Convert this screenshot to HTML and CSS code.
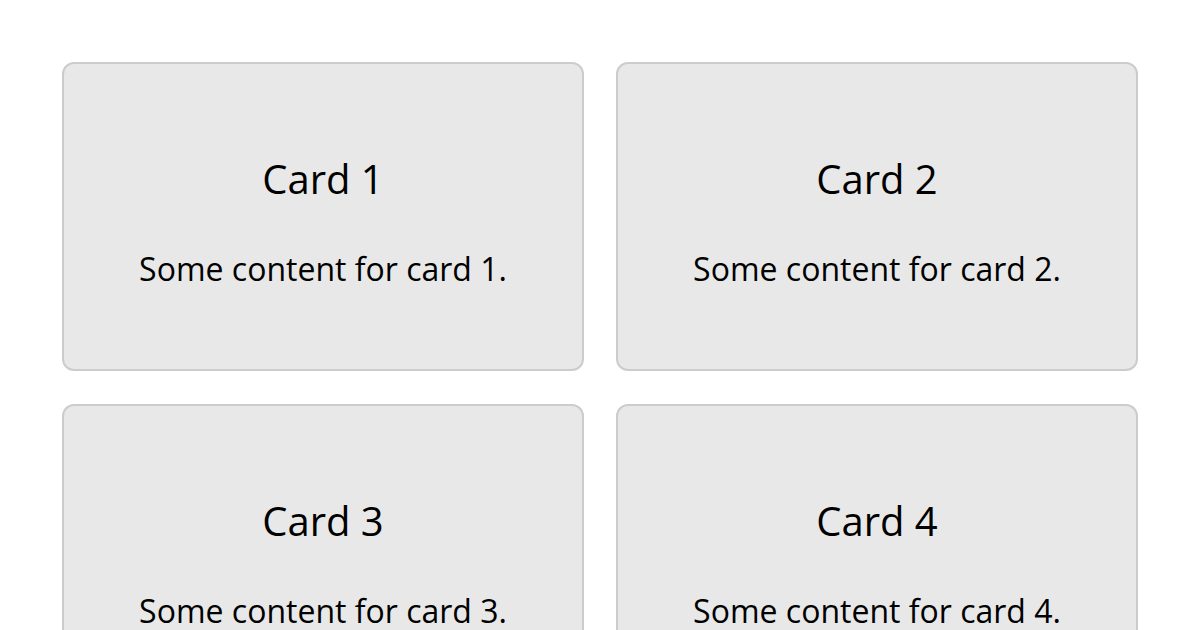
FILE: index.html
```html
<!DOCTYPE html>
<html lang="en">
<head>
    <meta charset="UTF-8">
    <meta name="viewport" content="width=device-width, initial-scale=1.0">
    <title>Cards</title>
    <link rel="stylesheet" href="styles.css">
</head>
<body>
    <div class="card-grid">
        <div class="card">
            <h2>Card 1</h2>
            <p>Some content for card 1.</p>
        </div>
        <div class="card">
            <h2>Card 2</h2>
            <p>Some content for card 2.</p>
        </div>
        <div class="card">
            <h2>Card 3</h2>
            <p>Some content for card 3.</p>
        </div>
        <div class="card">
            <h2>Card 4</h2>
            <p>Some content for card 4.</p>
        </div>
    </div>
</body>
</html>
```

FILE: styles.css
```css
* {
    margin: 0;
    padding: 0;
    box-sizing: border-box;
}

body {
    font-family: 'Open Sans', sans-serif;
    background: #fff;
    color: #000;
}

.card-grid {
    display: grid;
    grid-template-columns: 1fr 1fr;
    gap: 33px 32px;
    padding: 62px;
}

.card {
    height: 309px;
    background: #e8e8e8;
    border: 2px solid #ccc;
    border-radius: 12px;
    display: flex;
    flex-direction: column;
    align-items: center;
    justify-content: center;
    text-align: center;
    padding-top: 8px;
}

.card h2 {
    font-size: 40px;
    font-weight: 400;
    margin-bottom: 41px;
}

.card p {
    font-size: 32px;
}
```
